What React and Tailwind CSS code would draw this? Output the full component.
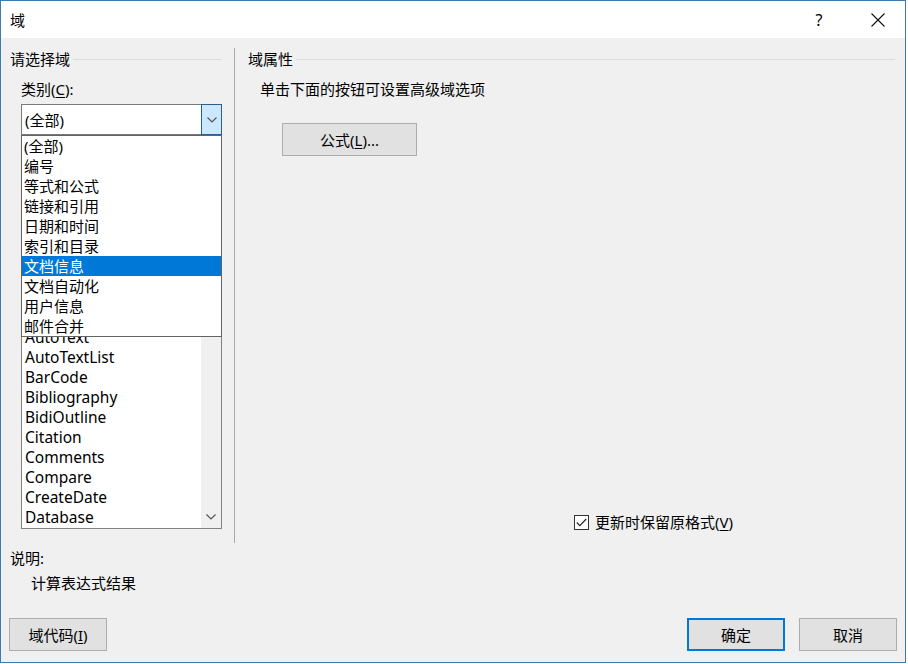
import React from "react";

const F = { fontFamily: '"Noto Sans", "Noto Sans CJK SC", sans-serif' };

const categories = ["(全部)", "编号", "等式和公式", "链接和引用", "日期和时间", "索引和目录", "文档信息", "文档自动化", "用户信息", "邮件合并"];
const hiddenFields = ["= (Formula)", "AddressBlock", "Advance", "Ask", "Author", "AutoNum", "AutoNumLgl", "AutoNumOut"];
const fields = ["AutoText", "AutoTextList", "BarCode", "Bibliography", "BidiOutline", "Citation", "Comments", "Compare", "CreateDate", "Database"];

function Chevron({ className }) {
  return (
    <svg width="10" height="6" viewBox="0 0 10 6" className={className}>
      <path d="M0.5 0.5 L5 5 L9.5 0.5" fill="none" stroke="#505050" strokeWidth="1.1" />
    </svg>
  );
}

function Btn({ children, primary, className = "" }) {
  return (
    <div
      className={`w-[98px] h-[33px] flex items-center justify-center bg-[#e1e1e1] text-[15px] leading-[20px] text-black ${
        primary ? "border-2 border-[#0078d7]" : "border border-[#adadad]"
      } ${className}`}
    >
      {children}
    </div>
  );
}

export default function App() {
  return (
    <div className="w-[908px] h-[664px] bg-white text-black" style={F}>
      <div className="w-[906px] h-[663px] border border-[#3b7cb0] flex flex-col bg-[#f0f0f0]">
        {/* Title bar */}
        <div className="h-[37px] bg-white flex items-center shrink-0">
          <div className="pl-[9px] text-[15px] leading-[20px] flex-1">域</div>
          <div className="text-[16px] leading-[20px] w-[14px] mr-[45px] text-center">?</div>
          <svg width="14" height="14" viewBox="0 0 14 14" className="mr-[20px]">
            <path d="M0.5 0.5 L13.5 13.5 M13.5 0.5 L0.5 13.5" stroke="#111" strokeWidth="1.1" />
          </svg>
        </div>

        {/* Body */}
        <div className="relative flex-1 flex flex-col">
          <div className="flex mt-[10px] h-[495px]">
            {/* Left column */}
            <div className="w-[233px] shrink-0 flex flex-col pt-px">
              <div className="flex items-center h-[20px] pl-[9px] pr-[13px]">
                <span className="text-[15px] leading-[20px]">请选择域</span>
                <div className="flex-1 h-px bg-[#dcdcdc] ml-[3px]" />
              </div>
              <div className="pl-[20px] mt-[10px] h-[20px] text-[15px] leading-[20px]">
                类别(<span className="underline underline-offset-2">C</span>):
              </div>
              <div className="ml-[20px] mt-[5px] w-[201px] h-[31px] flex">
                <div className="flex-1 border border-r-0 border-[#7a7a7a] bg-white flex items-center pl-[3px] text-[15px] leading-[20px]">
                  (全部)
                </div>
                <div className="w-[21px] border border-[#2a5f8f] bg-[#cce8ff] flex items-center justify-center">
                  <Chevron />
                </div>
              </div>
              <div className="pl-[20px] h-[31px] flex items-center text-[15px] invisible">域名(F):</div>
              <div className="ml-[20px] w-[201px] h-[363px] border border-[#828282] bg-white flex">
                <div className="flex-1 flex flex-col overflow-hidden pl-[3px] text-[15.5px]">
                  {hiddenFields.map((f) => (
                    <div key={f} className="h-[20px] shrink-0 leading-[20px] whitespace-nowrap invisible">
                      {f}
                    </div>
                  ))}
                  {fields.map((f) => (
                    <div key={f} className="h-[20px] shrink-0 leading-[20px] whitespace-nowrap">
                      {f}
                    </div>
                  ))}
                </div>
                <div className="w-[20px] bg-[#f0f0f0] flex flex-col justify-end items-center pb-[8px]">
                  <Chevron />
                </div>
              </div>
            </div>

            {/* Separator */}
            <div className="w-px bg-[#a9a9a9] shrink-0" />

            {/* Right column */}
            <div className="flex-1 flex flex-col pt-px">
              <div className="flex items-center h-[20px] pl-[13px] pr-[10px]">
                <span className="text-[15px] leading-[20px]">域属性</span>
                <div className="flex-1 h-px bg-[#dcdcdc] ml-[3px]" />
              </div>
              <div className="pl-[25px] mt-[10px] h-[20px] text-[15px] leading-[20px]">单击下面的按钮可设置高级域选项</div>
              <div className="ml-[47px] mt-[24px] w-[135px] h-[33px] flex items-center justify-center bg-[#e1e1e1] border border-[#adadad] text-[15px] leading-[20px]">
                公式(<span className="underline underline-offset-2">L</span>)...
              </div>
              <div className="flex-1" />
              <div className="flex items-center h-[20px] pl-[339px] mb-[11px]">
                <div className="w-[15px] h-[15px] border border-[#333] bg-white flex items-center justify-center">
                  <svg width="11" height="9" viewBox="0 0 11 9">
                    <path d="M0.8 4.5 L3.8 7.6 L10.2 1" fill="none" stroke="#222" strokeWidth="1.1" />
                  </svg>
                </div>
                <span className="ml-[6px] text-[15px] leading-[20px]">
                  更新时保留原格式(<span className="underline underline-offset-2">V</span>)
                </span>
              </div>
            </div>
          </div>

          {/* Description */}
          <div className="pl-[9px] mt-[5px] h-[20px] text-[15px] leading-[20px]">说明:</div>
          <div className="pl-[30px] mt-[5px] h-[20px] text-[15px] leading-[20px]">计算表达式结果</div>

          {/* Buttons */}
          <div className="flex mt-[25px] px-[8px]">
            <Btn>
              域代码(<span className="underline underline-offset-2">I</span>)
            </Btn>
            <div className="flex-1" />
            <Btn primary>确定</Btn>
            <Btn className="ml-[14px]">取消</Btn>
          </div>

          {/* Dropdown overlay */}
          <div className="absolute left-[20px] top-[97px] w-[201px] h-[202px] border border-[#646464] bg-white flex flex-col">
            {categories.map((c) => (
              <div
                key={c}
                className={`h-[20px] shrink-0 pl-[2px] text-[15px] leading-[20px] ${
                  c === "文档信息" ? "bg-[#0078d7] text-white" : ""
                }`}
              >
                {c}
              </div>
            ))}
          </div>
        </div>
      </div>
    </div>
  );
}
